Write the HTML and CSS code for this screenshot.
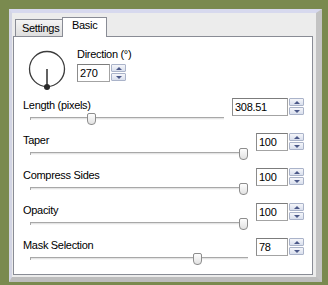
FILE: index.html
```html
<!DOCTYPE html>
<html lang="en">
<head>
  <meta charset="UTF-8">
  <title>Basic</title>
  <link rel="stylesheet" href="styles.css">
</head>
<body>
  <div class="window">
    <div class="tabs">
      <div class="tab">Settings</div>
      <div class="tab active">Basic</div>
    </div>

    <div class="panel">
      <!-- arah -->
      <div class="direction">
        <svg class="dial" width="40" height="42" viewBox="0 0 40 42">
          <circle cx="20" cy="19" r="17.5" fill="none" stroke="#3c3c3c" stroke-width="1.3"/>
          <line x1="20" y1="19" x2="20" y2="37" stroke="#3c3c3c" stroke-width="1.6"/>
          <circle cx="20" cy="37" r="3" fill="#2a2a2a"/>
        </svg>
        <div class="dir-field">
          <div class="label">Direction (°)</div>
          <div class="spin">
            <div class="box w33">270</div>
            <div class="arrows"><span class="up"></span><span class="down"></span></div>
          </div>
        </div>
      </div>

      <div class="rows">
        <div class="row">
          <div class="label">Length (pixels)</div>
          <div class="spin">
            <div class="box w56">308.51</div>
            <div class="arrows"><span class="up"></span><span class="down"></span></div>
          </div>
          <div class="slider"><div class="thumb" style="left: calc((100% - 9px) * 0.31)"></div></div>
        </div>

        <div class="row">
          <div class="label">Taper</div>
          <div class="spin">
            <div class="box">100</div>
            <div class="arrows"><span class="up"></span><span class="down"></span></div>
          </div>
          <div class="slider"><div class="thumb" style="left: calc((100% - 9px) * 1)"></div></div>
        </div>

        <div class="row">
          <div class="label">Compress Sides</div>
          <div class="spin">
            <div class="box">100</div>
            <div class="arrows"><span class="up"></span><span class="down"></span></div>
          </div>
          <div class="slider"><div class="thumb" style="left: calc((100% - 9px) * 1)"></div></div>
        </div>

        <div class="row">
          <div class="label">Opacity</div>
          <div class="spin">
            <div class="box">100</div>
            <div class="arrows"><span class="up"></span><span class="down"></span></div>
          </div>
          <div class="slider"><div class="thumb" style="left: calc((100% - 9px) * 1)"></div></div>
        </div>

        <div class="row">
          <div class="label">Mask Selection</div>
          <div class="spin">
            <div class="box">78</div>
            <div class="arrows"><span class="up"></span><span class="down"></span></div>
          </div>
          <div class="slider"><div class="thumb" style="left: calc((100% - 9px) * 0.78)"></div></div>
        </div>
      </div>
    </div>
  </div>
</body>
</html>
```

FILE: styles.css
```css
body {
  margin: 0;
  background: #7a8a4f;
  font-family: "Liberation Sans", Arial, sans-serif;
  font-size: 11px;
  color: #000;
}

.window {
  margin: 9px 0 0 9px;
  width: 304px;
  height: 264px;
  background: #ececec;
  border-top: 4px solid #d7d9ee;
  border-left: 3px solid #d3d5e4;
  border-right: 6px solid #c3c3c3;
  border-bottom: 5px solid #bdbdbd;
}

.tabs {
  display: flex;
  align-items: flex-end;
  height: 19px;
  margin: 4px 0 0 3px;
}

.tab {
  box-sizing: border-box;
  height: 17px;
  width: 48px;
  padding: 2px 0 0 6px;
  line-height: 13px;
  letter-spacing: -0.3px;
  border: 1px solid #898c95;
  border-bottom: none;
  background: linear-gradient(#f4f4f4, #dedede);
}

.tab.active {
  position: relative;
  z-index: 1;
  height: 20px;
  width: 45px;
  margin-bottom: -1px;
  margin-left: -1px;
  padding: 1px 0 0 9px;
  background: #fff;
}

.panel {
  box-sizing: border-box;
  width: 300px;
  height: 239px;
  margin-left: 1px;
  background: #fff;
  border: 1px solid #898c95;
}

.label {
  line-height: 13px;
  letter-spacing: -0.3px;
  white-space: nowrap;
}

.direction {
  display: flex;
  margin: 11px 0 0 13px;
}

.dial {
  display: block;
  margin-top: 2px;
}

.dir-field {
  margin-left: 10px;
}

.dir-field .spin {
  margin-top: 3px;
}

.rows {
  margin: 6px 8px 0 9px;
}

.row {
  display: grid;
  grid-template-columns: 1fr auto;
  grid-template-rows: 14px 14px;
  column-gap: 8px;
  height: 35px;
}

.row .label {
  margin-top: 1px;
}

.row .spin {
  grid-column: 2;
  grid-row: 1 / 3;
  align-self: start;
}

.row .slider {
  grid-column: 1;
  grid-row: 2;
}

/* spin box */
.spin {
  display: flex;
  height: 18px;
}

.box {
  box-sizing: border-box;
  width: 32px;
  height: 18px;
  padding-left: 2px;
  line-height: 16px;
  letter-spacing: -0.3px;
  border: 1px solid #a3a3a3;
  border-top-color: #7c7c7c;
  border-left-color: #8c8c8c;
  background: #fff;
}

.box.w33 { width: 33px; }
.box.w56 { width: 56px; }

.arrows {
  display: flex;
  flex-direction: column;
  gap: 1px;
  width: 15px;
  margin-left: 1px;
}

.arrows span {
  box-sizing: border-box;
  display: flex;
  align-items: center;
  justify-content: center;
  height: 8px;
  border: 1px solid #aab3c9;
  border-radius: 1px;
  background: linear-gradient(#f5f6fa, #d9dfed);
}

.arrows span::before {
  content: "";
  border-left: 3px solid transparent;
  border-right: 3px solid transparent;
}

.arrows .up::before {
  border-bottom: 3px solid #4b5888;
}

.arrows .down::before {
  border-top: 3px solid #4b5888;
}

/* trackbar */
.slider {
  position: relative;
  height: 14px;
  margin-left: 7px;
}

.slider::before {
  content: "";
  position: absolute;
  left: 0;
  right: 0;
  top: 5px;
  height: 1px;
  background: #e4e4e4;
  border-top: 1px solid #a8a8a8;
  border-bottom: 1px solid #f7f7f7;
}

.slider::after {
  content: "";
  position: absolute;
  left: 0;
  top: 5px;
  width: 1px;
  height: 3px;
  background: #a8a8a8;
}

.thumb {
  position: absolute;
  top: 1px;
  box-sizing: border-box;
  width: 9px;
  height: 12px;
  border: 1px solid #8d8d8d;
  border-radius: 2px 2px 4px 4px;
  background: linear-gradient(#fdfdfd, #e2e2e2);
}
```
